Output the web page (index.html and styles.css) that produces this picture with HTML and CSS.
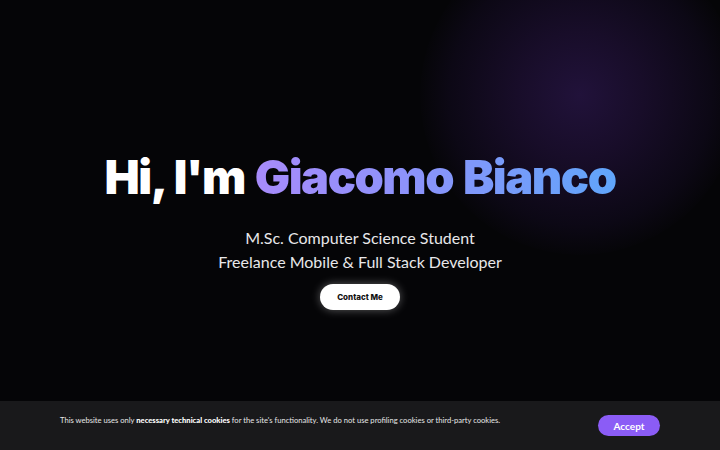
FILE: index.html
```html
<!DOCTYPE html>
<html lang="en">
<head>
<meta charset="utf-8">
<title>Giacomo Bianco</title>
<link rel="stylesheet" href="styles.css">
</head>
<body>
<main class="hero">
  <div class="glow"></div>
  <div class="hero-content">
    <h1 class="title">Hi, I'm <span class="name">Giacomo Bianco</span></h1>
    <p class="subtitle">M.Sc. Computer Science Student<br>Freelance Mobile &amp; Full Stack Developer</p>
    <a class="contact-btn" href="#">Contact Me</a>
  </div>
</main>
<div class="cookie-bar">
  <p class="cookie-text">This website uses only <strong>necessary technical cookies</strong> for the site's functionality. We do not use profiling cookies or third-party cookies.</p>
  <button class="accept-btn">Accept</button>
</div>
</body>
</html>
```
FILE: styles.css
```css
html, body {
  margin: 0;
  padding: 0;
  height: 100%;
  background: #050507;
  font-family: "Lato", "Liberation Sans", sans-serif;
  color: #fff;
  overflow: hidden;
}
.hero {
  position: relative;
  height: 450px;
  display: flex;
  align-items: center;
  justify-content: center;
  padding-top: 7px;
  box-sizing: border-box;
}
.glow {
  position: absolute;
  left: 420px;
  top: -65px;
  width: 320px;
  height: 320px;
  border-radius: 50%;
  background: radial-gradient(circle, #21123a 0%, #180d29 28%, #0c0815 58%, rgba(5,5,7,0) 72%);
}
.hero-content {
  position: relative;
  display: flex;
  flex-direction: column;
  align-items: center;
  text-align: center;
}
.title {
  margin: 0;
  font-family: "Inter", "Lato", sans-serif;
  font-size: 47px;
  line-height: 60px;
  font-weight: 900;
  letter-spacing: -1.5px;
  word-spacing: 2px;
}
.name {
  background: linear-gradient(90deg, #a78bfa 0%, #8b93fa 45%, #60a5fa 100%);
  -webkit-background-clip: text;
  background-clip: text;
  color: transparent;
}
.subtitle {
  margin: 19px 0 0;
  font-size: 16px;
  line-height: 24px;
  font-weight: 400;
  color: #e8e8ea;
}
.contact-btn {
  margin-top: 10px;
  display: inline-flex;
  align-items: center;
  justify-content: center;
  width: 80px;
  height: 26px;
  border-radius: 13px;
  background: #fff;
  color: #111;
  font-family: "Inter", sans-serif;
  font-size: 8px;
  font-weight: 800;
  text-decoration: none;
  box-shadow: 0 0 10px rgba(255,255,255,0.35);
}
.cookie-bar {
  position: fixed;
  left: 0;
  right: 0;
  bottom: 0;
  height: 49px;
  background: #19191b;
  display: flex;
  align-items: center;
  justify-content: space-between;
  padding: 0 60px;
  box-sizing: border-box;
}
.cookie-text {
  margin: 0 0 11px;
  font-size: 7.6px;
  color: #e6e6e6;
}
.cookie-text strong {
  font-weight: 900;
  color: #fff;
}
.accept-btn {
  width: 62px;
  height: 21px;
  border: none;
  border-radius: 11px;
  background: #8b5cf6;
  color: #fff;
  font-family: inherit;
  font-size: 10px;
  font-weight: 700;
  padding: 0;
}
```
